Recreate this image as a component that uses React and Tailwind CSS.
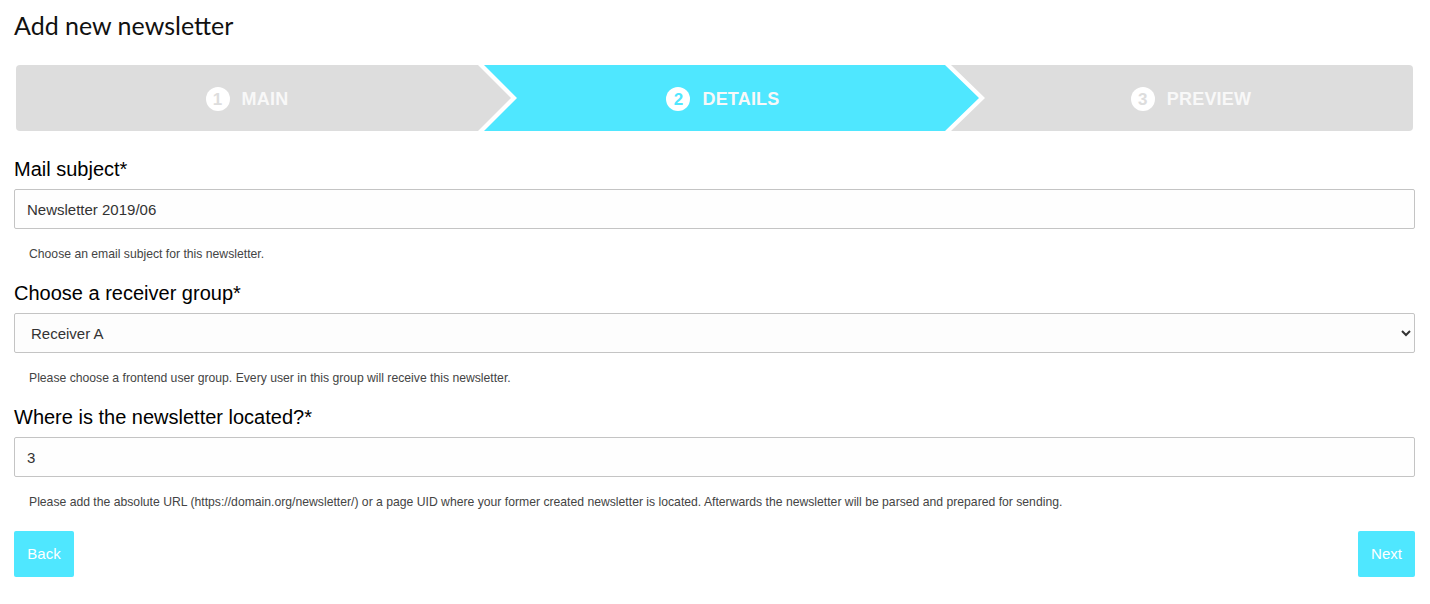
import React from "react";

const steps = [
  { n: 1, label: "MAIN" },
  { n: 2, label: "DETAILS", active: true },
  { n: 3, label: "PREVIEW" },
];

function StepLabel({ n, label, active }) {
  return (
    <div className="flex items-center gap-[12px] pt-[2px]">
      <span
        className={
          "flex h-[24px] w-[24px] items-center justify-center rounded-full bg-white text-[17px] font-bold leading-none " +
          (active ? "text-[#4fe7ff]" : "text-[#dddddd]")
        }
      >
        {n}
      </span>
      <span className="text-[18px] font-bold tracking-[0.2px] text-[#f8f8f8]">{label}</span>
    </div>
  );
}

function Stepper() {
  return (
    <div className="mx-[2px] mt-[24px] flex h-[66px]">
      <div
        className="flex w-[495px] shrink-0 items-center justify-center rounded-l-[4px] bg-[#dddddd] pr-[33px]"
        style={{ clipPath: "polygon(0 0, calc(100% - 33px) 0, 100% 50%, calc(100% - 33px) 100%, 0 100%)" }}
      >
        <StepLabel {...steps[0]} />
      </div>
      <div
        className="ml-[-27px] flex w-[495px] shrink-0 items-center justify-center bg-[#4fe7ff] pl-[16px] pr-[33px]"
        style={{ clipPath: "polygon(0 0, calc(100% - 34px) 0, 100% 50%, calc(100% - 34px) 100%, 0 100%, 33px 50%)" }}
      >
        <StepLabel {...steps[1]} />
      </div>
      <div
        className="ml-[-28px] flex flex-1 items-center justify-center rounded-r-[4px] bg-[#dddddd] pl-[18px]"
        style={{ clipPath: "polygon(0 0, 100% 0, 100% 100%, 0 100%, 34px 50%)" }}
      >
        <StepLabel {...steps[2]} />
      </div>
    </div>
  );
}

function Field({ label, help, children, first }) {
  return (
    <div className={first ? "mt-[26px]" : "mt-[19px]"}>
      <label className="block text-[20px] leading-[24px] text-black">{label}</label>
      <div className="mt-[8px]">{children}</div>
      <p className="mt-[17px] pl-[15px] text-[12.2px] leading-[16px] text-[#444]">{help}</p>
    </div>
  );
}

export default function App() {
  return (
    <div className="min-h-screen bg-white pl-[14px] pr-[15px] pt-[9px]" style={{ fontFamily: "'Liberation Sans', Arial, sans-serif" }}>
      <h1 className="text-[25px] leading-[32px] text-[#111]" style={{ fontFamily: "Lato, 'Open Sans', sans-serif" }}>
        Add new newsletter
      </h1>

      <Stepper />

      <Field first label="Mail subject*" help="Choose an email subject for this newsletter.">
        <input
          type="text"
          defaultValue="Newsletter 2019/06"
          className="block h-[40px] w-full rounded-[2px] border border-[#c4c4c4] bg-[#fefefe] px-[12px] text-[15px] text-[#333] outline-none"
        />
      </Field>

      <Field label="Choose a receiver group*" help="Please choose a frontend user group. Every user in this group will receive this newsletter.">
        <select
          defaultValue="a"
          className="block h-[40px] w-full rounded-[2px] border border-[#c4c4c4] bg-[#fdfdfd] pl-[12px] pr-[8px] text-[15px] text-[#333] outline-none"
        >
          <option value="a">Receiver A</option>
          <option value="b">Receiver B</option>
        </select>
      </Field>

      <Field
        label="Where is the newsletter located?*"
        help="Please add the absolute URL (https://domain.org/newsletter/) or a page UID where your former created newsletter is located. Afterwards the newsletter will be parsed and prepared for sending."
      >
        <input
          type="text"
          defaultValue="3"
          className="block h-[40px] w-full rounded-[2px] border border-[#c4c4c4] bg-[#fefefe] px-[12px] text-[15px] text-[#333] outline-none"
        />
      </Field>

      <div className="mt-[21px] flex justify-between">
        <button className="h-[46px] w-[60px] rounded-[2px] bg-[#4fe7ff] text-[15px] text-white">Back</button>
        <button className="h-[46px] w-[57px] rounded-[2px] bg-[#4fe7ff] text-[15px] text-white">Next</button>
      </div>
    </div>
  );
}
